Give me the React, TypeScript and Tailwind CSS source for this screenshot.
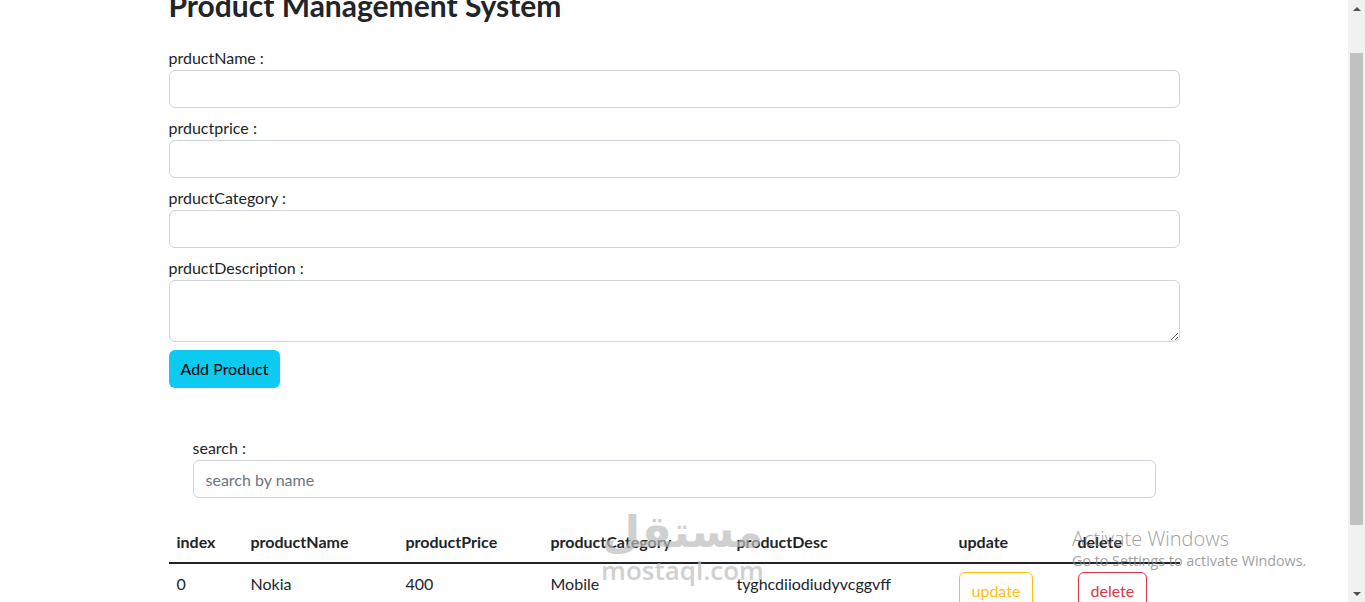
import { useState } from "react";

type Product = {
	name: string;
	price: string;
	category: string;
	desc: string;
};

const fields = [
	{ id: "name", label: "prductName :" },
	{ id: "price", label: "prductprice :" },
	{ id: "category", label: "prductCategory :" },
];

const cols = [
	{ title: "index", w: "w-[74px]" },
	{ title: "productName", w: "w-[155px]" },
	{ title: "productPrice", w: "w-[145px]" },
	{ title: "productCategory", w: "w-[186px]" },
	{ title: "productDesc", w: "w-[222px]" },
	{ title: "update", w: "w-[119px]" },
	{ title: "delete", w: "w-[110px]" },
];

const inputCls =
	"block w-full h-[38px] px-3 py-1.5 border border-[#ced4da] rounded-[6px] bg-white text-base outline-none";

function Scrollbar() {
	return (
		<div className="w-[17px] h-full bg-[#f1f1f1] flex flex-col items-center shrink-0">
			<div className="h-[17px] flex items-center justify-center">
				<div className="w-0 h-0 border-l-[4px] border-r-[4px] border-b-[4px] border-l-transparent border-r-transparent border-b-[#505050]" />
			</div>
			<div className="mt-[36px] w-[13px] h-[472px] bg-[#c1c1c1]" />
			<div className="flex-1" />
			<div className="h-[17px] flex items-center justify-center">
				<div className="w-0 h-0 border-l-[4px] border-r-[4px] border-t-[4px] border-l-transparent border-r-transparent border-t-[#505050]" />
			</div>
		</div>
	);
}

export default function App() {
	const [products] = useState<Product[]>([
		{ name: "Nokia", price: "400", category: "Mobile", desc: "tyghcdiiodiudyvcggvff" },
	]);

	return (
		<div
			className="h-screen w-full flex overflow-hidden bg-white text-[#212529] text-base leading-6"
			style={{ fontFamily: "Lato, 'Open Sans', sans-serif" }}
		>
			<div className="relative flex-1 overflow-hidden">
				<div className="w-3/4 mx-auto -mt-[13px]">
					<h2 className="text-[30px] font-bold leading-[36px] mb-[23px]">Product Management System</h2>

					{fields.map((f) => (
						<div key={f.id} className="mb-2">
							<label htmlFor={f.id} className="block">{f.label}</label>
							<input id={f.id} className={inputCls} />
						</div>
					))}
					<div className="mb-2">
						<label htmlFor="desc" className="block">prductDescription :</label>
						<textarea
							id="desc"
							rows={2}
							className="block w-full h-[62px] px-3 py-1.5 border border-[#ced4da] rounded-[6px] bg-white outline-none"
						/>
					</div>
					<button className="h-[38px] px-3 rounded-[6px] bg-[#0dcaf0] text-black">Add Product</button>

					<div className="mx-6 mt-12 mb-6">
						<label htmlFor="search" className="block">search :</label>
						<input
							id="search"
							placeholder="search by name"
							className={inputCls + " placeholder:text-[#6c757d]"}
						/>
					</div>

					<table className="w-full table-fixed border-collapse text-left">
						<thead>
							<tr>
								{cols.map((c) => (
									<th key={c.title} className={c.w + " px-2 py-2 font-bold border-b border-[#dee2e6]"}>
										{c.title}
									</th>
								))}
							</tr>
						</thead>
						<tbody className="border-t-2 border-[#212529]">
							{products.map((p, i) => (
								<tr key={i} className="border-b border-[#dee2e6]">
									<td className="px-2 py-2 align-top">{i}</td>
									<td className="px-2 py-2 align-top">{p.name}</td>
									<td className="px-2 py-2 align-top">{p.price}</td>
									<td className="px-2 py-2 align-top">{p.category}</td>
									<td className="px-2 py-2 align-top">{p.desc}</td>
									<td className="px-2 py-2 align-top">
										<button className="h-[38px] px-3 border border-[#ffc107] rounded-[6px] text-[#ffc107]">update</button>
									</td>
									<td className="px-2 py-2 align-top">
										<button className="h-[38px] px-3 border border-[#dc3545] rounded-[6px] text-[#dc3545]">delete</button>
									</td>
								</tr>
							))}
						</tbody>
					</table>
				</div>

				{/* watermark */}
				<div className="absolute left-[600px] top-[506px] w-[165px] flex flex-col items-center pointer-events-none text-[#bdbdbd] opacity-70">
					<div className="text-[44px] font-bold leading-[52px]" style={{ fontFamily: "'DejaVu Sans', sans-serif" }}>مستقل</div>
					<div className="text-[26px] font-semibold leading-[28px] -mt-[2px]" style={{ fontFamily: "'Open Sans', sans-serif" }}>mostaql.com</div>
				</div>

				{/* windows activation notice */}
				<div className="absolute left-[1072px] top-[526px] pointer-events-none text-[#8a8a8a] opacity-80" style={{ fontFamily: "'Open Sans', sans-serif" }}>
					<div className="text-[20px] leading-[26px] font-light">Activate Windows</div>
					<div className="text-[14.3px] leading-[18px]">Go to Settings to activate Windows.</div>
				</div>
			</div>
			<Scrollbar />
		</div>
	);
}
